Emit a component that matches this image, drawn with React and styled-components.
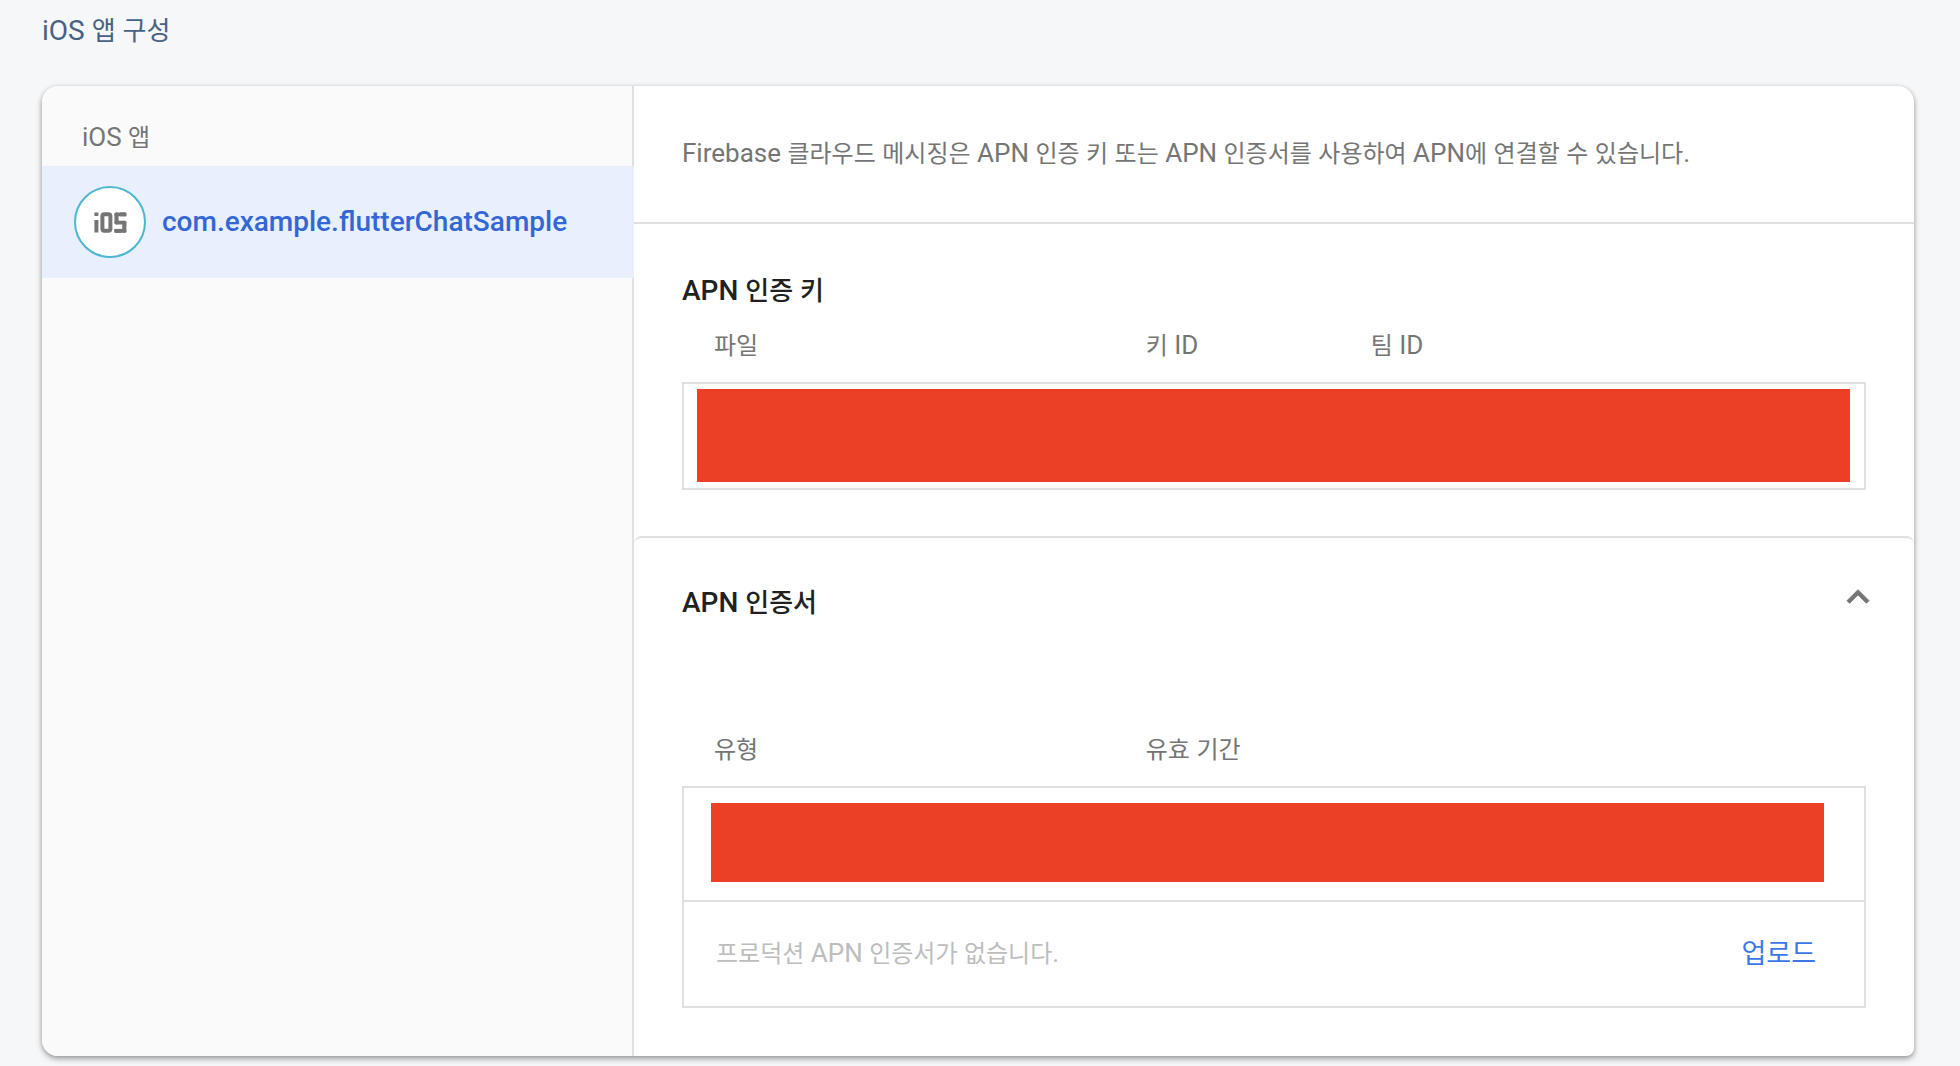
import styled, { createGlobalStyle } from "styled-components";

const colors = {
  page: "#f5f7f9",
  title: "#476282",
  text: "#757575",
  heading: "#212121",
  hint: "#bdbdbd",
  line: "#e0e0e0",
  blue: "#3367d6",
  link: "#3b78e7",
  red: "#eb4026",
  teal: "#4db6d2",
};

// Hangul is drawn two pixels smaller than the Latin text next to it
const Mixed = ({ children }) =>
  children.split(/([가-힣]+)/).map((part, i) => (
    i % 2 ? <Hangul key={i}>{part}</Hangul> : part
  ));

const IosLogo = () => (
  <svg width="33" height="21" viewBox="0 0 33 21" fill="#757575" aria-hidden="true">
    <rect x="0.4" y="0.5" width="4" height="3.5" />
    <rect x="0.4" y="8" width="4" height="12.5" />
    <rect x="8.4" y="2.3" width="8" height="16.4" rx="2" fill="none" stroke="#757575" strokeWidth="4" />
    <rect x="20.4" y="0.5" width="12" height="3.8" rx="1.5" />
    <rect x="26" y="0.5" width="6.4" height="3.8" />
    <rect x="20.4" y="0.5" width="4.2" height="12" rx="2" />
    <rect x="20.4" y="8.7" width="12" height="3.8" rx="1.9" />
    <rect x="28.2" y="8.7" width="4.2" height="12" rx="2" />
    <rect x="20.4" y="16.9" width="12" height="3.8" rx="1.5" />
    <rect x="20.4" y="16.9" width="6.4" height="3.8" />
  </svg>
);

const App = () => (
  <Page>
    <GlobalStyle />
    <Title><Mixed>iOS 앱 구성</Mixed></Title>
    <Card>
      <Sidebar>
        <SidebarTitle><Mixed>iOS 앱</Mixed></SidebarTitle>
        <AppButton type="button">
          <AppIcon><IosLogo /></AppIcon>
          com.example.flutterChatSample
        </AppButton>
      </Sidebar>
      <Content>
        <Intro>
          <Mixed>Firebase 클라우드 메시징은 APN 인증 키 또는 APN 인증서를 사용하여 APN에 연결할 수 있습니다.</Mixed>
        </Intro>
        <KeySection>
          <Heading><Mixed>APN 인증 키</Mixed></Heading>
          <Table>
            <thead>
              <tr>
                <HeadCell $width="39%" $first><Mixed>파일</Mixed></HeadCell>
                <HeadCell $width="19%"><Mixed>키 ID</Mixed></HeadCell>
                <HeadCell><Mixed>팀 ID</Mixed></HeadCell>
              </tr>
            </thead>
            <tbody>
              <tr>
                <MaskedCell colSpan={3} $pad="5px 14px 6px 13px"><Mask $height={93} /></MaskedCell>
              </tr>
            </tbody>
          </Table>
        </KeySection>
        <CertSection>
          <CertHeader>
            <Heading><Mixed>APN 인증서</Mixed></Heading>
            <Toggle type="button" aria-label="APN 인증서" aria-expanded="true">
              <svg width="44" height="44" viewBox="0 0 24 24" fill={colors.text}>
                <path d="M12 8l-6 6 1.41 1.41L12 10.83l4.59 4.58L18 14z" stroke={colors.text} strokeWidth="0.5" />
              </svg>
            </Toggle>
          </CertHeader>
          <Table>
            <thead>
              <tr>
                <HeadCell $width="39%" $first><Mixed>유형</Mixed></HeadCell>
                <HeadCell><Mixed>유효 기간</Mixed></HeadCell>
              </tr>
            </thead>
            <tbody>
              <tr>
                <MaskedCell colSpan={2} $pad="15px 40px 18px 27px"><Mask $height={79} /></MaskedCell>
              </tr>
              <tr>
                <EmptyCell><Mixed>프로덕션 APN 인증서가 없습니다.</Mixed></EmptyCell>
                <ActionCell><Upload type="button">업로드</Upload></ActionCell>
              </tr>
            </tbody>
          </Table>
        </CertSection>
      </Content>
    </Card>
  </Page>
);

const GlobalStyle = createGlobalStyle`
  * {
    box-sizing: border-box;
  }

  body {
    margin: 0;
    background-color: ${colors.page};
    font-family: Roboto, "Noto Sans CJK KR", sans-serif;
    font-size: 26px;
    line-height: 32px;
    color: ${colors.text};
  }

  h1, h2, h3, p {
    margin: 0;
  }

  button {
    border: 0;
    padding: 0;
    background: none;
    font: inherit;
    cursor: pointer;
  }
`;

const Hangul = styled.span`
  font-size: calc(1em - 2px);
  line-height: 1;
`;

const Page = styled.main`
  padding: 15px 46px 10px 42px;
`;

const Title = styled.h1`
  font-size: 28px;
  font-weight: 400;
  color: ${colors.title};
`;

const Card = styled.section`
  margin-top: 39px;
  display: grid;
  grid-template-columns: 37fr 80fr;
  border-radius: 16px 16px 8px 16px;
  background-color: white;
  box-shadow: 0 3px 6px rgba(0,0,0,.3), 0 1px 4px rgba(0,0,0,.16);
`;

const Sidebar = styled.nav`
  padding-top: 35px;
  border-right: 2px solid ${colors.line};
  border-radius: 16px 0 0 16px;
  background-color: #fafafa;
`;

const SidebarTitle = styled.h2`
  padding: 0 40px 13px;
  font-size: 26px;
  font-weight: 400;
`;

const AppButton = styled.button`
  && {
    display: flex;
    align-items: center;
    gap: 16px;
    width: calc(100% + 2px);
    padding: 20px 32px;
    background-color: #e8f0fe;
    color: ${colors.blue};
    font-size: 28px;
    font-weight: 500;
  }
`;

const AppIcon = styled.span`
  width: 72px;
  height: 72px;
  display: flex;
  align-items: center;
  justify-content: center;
  border: 2px solid ${colors.teal};
  border-radius: 50%;
  background-color: white;
`;

const Content = styled.div`
  min-width: 0;
`;

const Intro = styled.p`
  padding: 51px 48px 53px;
  border-bottom: 2px solid ${colors.line};
`;

const KeySection = styled.section`
  padding: 51px 48px 46px;
`;

const CertSection = styled.section`
  padding: 49px 48px 48px;
  border-top: 2px solid ${colors.line};
  border-radius: 8px;
`;

const CertHeader = styled.header`
  display: flex;
  justify-content: space-between;
  margin-bottom: 92px;
`;

const Heading = styled.h3`
  font-size: 28px;
  font-weight: 500;
  color: ${colors.heading};
`;

const Toggle = styled.button`
  height: 20px;
  display: flex;
  align-items: center;
  margin-right: -14px;
`;

const Table = styled.table`
  width: 100%;
  table-layout: fixed;
  border-spacing: 0;
`;

const HeadCell = styled.th`
  width: ${props => props.$width || "auto"};
  padding: 22px 0 21px;
  padding-left: ${props => props.$first ? "32px" : "2px"};
  text-align: left;
  font-weight: 400;
`;

const MaskedCell = styled.td`
  padding: ${props => props.$pad};
  border: 2px solid ${colors.line};
`;

const Mask = styled.div`
  height: ${props => props.$height}px;
  background-color: ${colors.red};
`;

const EmptyCell = styled.td`
  height: 106px;
  padding: 0 0 2px 32px;
  border: solid ${colors.line};
  border-width: 0 0 2px 2px;
  color: ${colors.hint};
`;

const ActionCell = styled.td`
  padding: 0 48px 0 0;
  border: solid ${colors.line};
  border-width: 0 2px 2px 0;
  text-align: right;
`;

const Upload = styled.button`
  && {
    color: ${colors.link};
    font-size: 27px;
  }
`;

export default App;
